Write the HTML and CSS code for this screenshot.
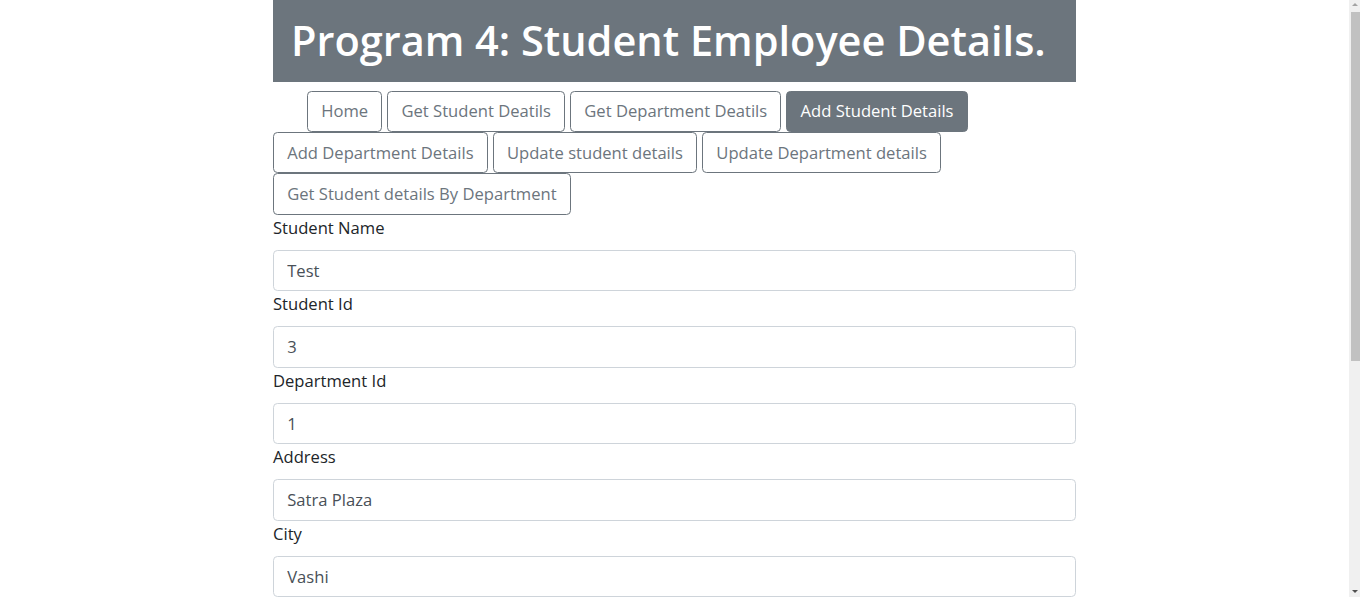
FILE: index.html
```html
<!DOCTYPE html>
<html lang="en">
<head>
<meta charset="utf-8">
<title>Program 4: Student Employee Details.</title>
<link rel="stylesheet" href="styles.css">
</head>
<body>
<div class="page">
  <div class="container">
    <div class="banner"><h1 class="title">Program 4: Student Employee Details.</h1></div>
    <div class="nav">
      <div class="nav-row first">
        <button class="btn">Home</button>
        <button class="btn">Get Student Deatils</button>
        <button class="btn">Get Department Deatils</button>
        <button class="btn active">Add Student Details</button>
      </div>
      <div class="nav-row">
        <button class="btn">Add Department Details</button>
        <button class="btn">Update student details</button>
        <button class="btn">Update Department details</button>
      </div>
      <div class="nav-row">
        <button class="btn">Get Student details By Department</button>
      </div>
    </div>
    <form class="form">
      <label class="label">Student Name</label>
      <input class="input" type="text" value="Test">
      <label class="label">Student Id</label>
      <input class="input" type="text" value="3">
      <label class="label">Department Id</label>
      <input class="input" type="text" value="1">
      <label class="label">Address</label>
      <input class="input" type="text" value="Satra Plaza">
      <label class="label">City</label>
      <input class="input" type="text" value="Vashi">
    </form>
  </div>
</div>
<div class="scrollbar" aria-hidden="true">
  <span class="arrow up"></span>
  <span class="thumb"></span>
  <span class="arrow down"></span>
</div>
</body>
</html>
```
FILE: styles.css
```css
html, body {
  margin: 0;
  padding: 0;
  background: #fff;
}
body {
  font-family: "Open Sans", "Noto Sans", sans-serif;
  font-size: 16.6px;
  line-height: 1.5;
  color: #212529;
}
.page {
  margin-right: 11px;
}
.container {
  width: 803px;
  margin: 0 auto;
}
.banner {
  background: #6c757d;
  height: 82px;
  display: flex;
  align-items: center;
  padding-left: 18px;
  box-sizing: border-box;
}
.title {
  margin: 0;
  color: #fff;
  font-size: 41.5px;
  font-weight: 600;
  line-height: 1.2;
  white-space: nowrap;
}
.nav {
  padding-top: 9px;
}
.nav-row {
  display: flex;
  gap: 5px;
}
.nav-row.first {
  padding-left: 34px;
}
.btn {
  font-family: inherit;
  font-size: 16.6px;
  line-height: 26.4px;
  padding: 6.4px 13.2px;
  border: 1px solid #6c757d;
  border-radius: 4.4px;
  background: #fff;
  color: #6c757d;
  cursor: pointer;
  height: 41.2px;
  box-sizing: border-box;
  white-space: nowrap;
}
.btn.active {
  background: #6c757d;
  color: #fff;
}
.form {
  display: flex;
  flex-direction: column;
}
.label {
  display: block;
  line-height: 26.4px;
  margin-bottom: 8.8px;
}
.input {
  display: block;
  box-sizing: border-box;
  width: 100%;
  height: 41.3px;
  padding: 6.4px 13.2px;
  font-family: inherit;
  font-size: 16.6px;
  line-height: 26.4px;
  color: #495057;
  background: #fff;
  border: 1px solid #ced4da;
  border-radius: 4.4px;
  margin: 0;
}
.scrollbar {
  position: fixed;
  top: 0;
  right: 0;
  bottom: 0;
  width: 11px;
  background: #f0f0f0;
}
.thumb {
  position: absolute;
  top: 12px;
  left: 2px;
  right: 0;
  height: 349px;
  background: #c1c1c1;
}
.arrow {
  position: absolute;
  left: 3px;
  width: 0;
  height: 0;
  border-left: 3.5px solid transparent;
  border-right: 3.5px solid transparent;
}
.arrow.up {
  top: 3px;
  border-bottom: 3.5px solid #a3a3a3;
}
.arrow.down {
  bottom: 4px;
  border-top: 3.5px solid #505050;
}
```
